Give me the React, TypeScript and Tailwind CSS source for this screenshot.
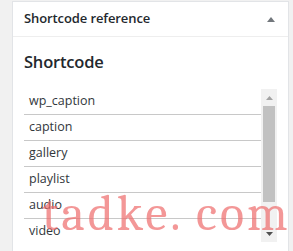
import React from "react";

const items = ["wp_caption", "caption", "gallery", "playlist", "audio", "video", "embed"];

export default function App() {
  return (
    <div
      className="relative w-[293px] h-[251px] overflow-hidden bg-[#f1f1f1] pl-[12px] pr-[4px] pt-[1px]"
      style={{ fontFamily: '"Open Sans", "Noto Sans", sans-serif' }}
    >
      <div className="bg-white border border-[#e2e4e7] h-[270px]">
        <div className="h-[35px] flex items-center justify-between pl-[11px] pr-[13px] border-b border-[#eeeeee]">
          <span className="text-[13px] font-semibold text-[#23282d] tracking-[-0.1px]">Shortcode reference</span>
          <svg width="8" height="5" viewBox="0 0 8 5">
            <polygon points="4,0 8,5 0,5" fill="#72777c" />
          </svg>
        </div>
        <div className="px-[11px]">
          <div className="mt-[13px] text-[16.5px] leading-[24px] font-semibold text-[#23282d] tracking-[-0.2px]">Shortcode</div>
          <div className="mt-[15px] h-[153px] flex overflow-hidden">
            <div className="flex-1 flex flex-col">
              {items.map((it) => (
                <div
                  key={it}
                  className="h-[26px] shrink-0 border-b border-[#c8c8c8] pl-[5px] flex items-center text-[12.5px] text-[#32373c]"
                >
                  {it}
                </div>
              ))}
            </div>
            <div className="w-[16px] bg-[#f1f1f1] flex flex-col items-center">
              <div className="h-[17px] w-full flex items-center justify-center">
                <svg width="7" height="4" viewBox="0 0 7 4">
                  <polygon points="3.5,0 7,4 0,4" fill="#a3a3a3" />
                </svg>
              </div>
              <div className="w-[12px] h-[96px] bg-[#c1c1c1]" />
              <div className="flex-1" />
              <div className="h-[17px] w-full flex items-center justify-center">
                <svg width="7" height="4" viewBox="0 0 7 4">
                  <polygon points="0,0 7,0 3.5,4" fill="#505050" />
                </svg>
              </div>
            </div>
          </div>
        </div>
      </div>
      <div className="absolute left-[42px] top-[189px] text-[50px] leading-none font-normal font-serif text-[#ee6b6b]/70 tracking-[3px] pointer-events-none whitespace-nowrap">
        tadke. com
      </div>
    </div>
  );
}
